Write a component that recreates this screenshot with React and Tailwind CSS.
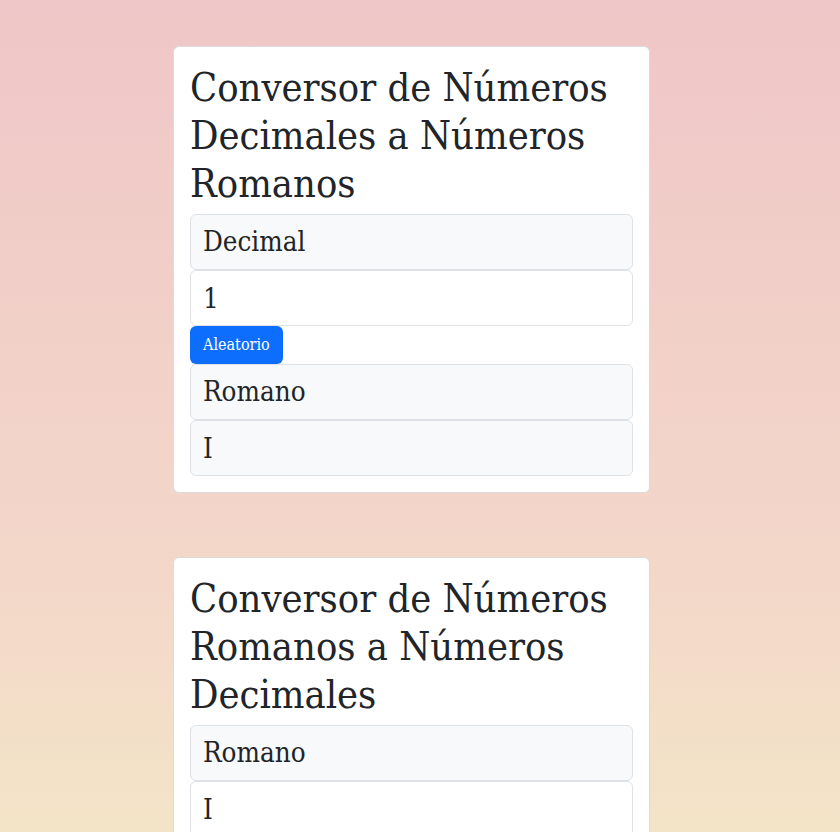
import React, { useState } from "react";

const font = { fontFamily: '"DejaVu Serif Condensed", "DejaVu Serif", serif' };

const LabelBox = ({ children }) => (
  <div className="h-[56px] flex items-center px-[12px] bg-[#f8f9fa] border border-[#dee2e6] rounded-[6px] text-[27.5px] text-[#212529]">
    {children}
  </div>
);

const ValueBox = ({ value, onChange, readOnly }) => (
  <input
    value={value}
    onChange={onChange}
    readOnly={readOnly}
    className={
      "h-[56px] w-full px-[12px] border border-[#dee2e6] rounded-[6px] text-[27.5px] text-[#212529] outline-none " +
      (readOnly ? "bg-[#f8f9fa]" : "bg-white")
    }
  />
);

const Card = ({ title, children }) => (
  <div className="w-[477px] bg-white border border-[#dcdcdc] rounded-[6px] p-4">
    <h1 className="text-[39.5px] leading-[48px] text-[#212529] mb-[7px]">{title}</h1>
    <div className="flex flex-col">{children}</div>
  </div>
);

export default function App() {
  const [decimal, setDecimal] = useState("1");
  const [romano, setRomano] = useState("I");

  return (
    <div
      style={font}
      className="min-h-screen bg-[linear-gradient(180deg,#efc6c7_0px,#f3d8c9_587px,#f3e4c7_832px,#f3e8c6_1200px)] pt-[46px] pb-[60px] pl-[173px]"
    >
      <div className="flex flex-col gap-[64px]">
        <Card title="Conversor de Números Decimales a Números Romanos">
          <LabelBox>Decimal</LabelBox>
          <ValueBox value={decimal} onChange={(e) => setDecimal(e.target.value)} />
          <div>
            <button className="h-[38px] px-[13px] bg-[#0d6efd] text-white text-[16px] rounded-[6px]">
              Aleatorio
            </button>
          </div>
          <LabelBox>Romano</LabelBox>
          <ValueBox value="I" readOnly />
        </Card>

        <Card title="Conversor de Números Romanos a Números Decimales">
          <LabelBox>Romano</LabelBox>
          <ValueBox value={romano} onChange={(e) => setRomano(e.target.value)} />
          <div>
            <button className="h-[38px] px-[13px] bg-[#0d6efd] text-white text-[16px] rounded-[6px]">
              Aleatorio
            </button>
          </div>
          <LabelBox>Decimal</LabelBox>
          <ValueBox value="1" readOnly />
        </Card>
      </div>
    </div>
  );
}
